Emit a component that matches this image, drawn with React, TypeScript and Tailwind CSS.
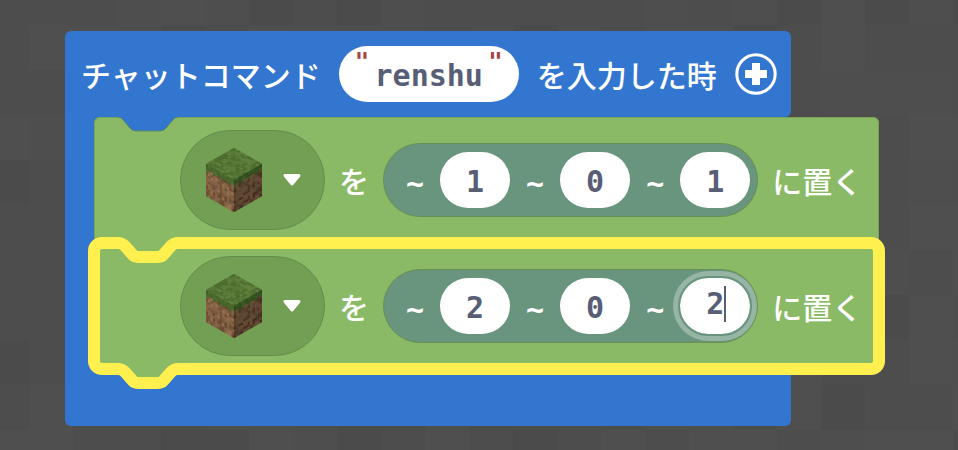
import React from "react";

const mono = "font-['DejaVu_Sans_Mono','Liberation_Mono',monospace] text-[30px] leading-[36px] font-bold";
const label = "font-['Noto_Sans_CJK_JP',sans-serif] text-[30px] leading-[36px] font-medium text-white whitespace-nowrap";
const quote =
  "self-start pt-[4px] font-['DejaVu_Sans_Mono','Liberation_Mono',monospace] text-[24px] leading-[24px] font-bold text-[#a94442]";

type Point = [number, number];

const greens = ["#4c6b2e", "#557535", "#5f7f3d", "#4f6d2f", "#587a38"];
const lightDirt = ["#8b6247", "#755039", "#9a6f51", "#6a4732", "#83604a", "#7d563d"];
const darkDirt = ["#5b3f2e", "#4b3325", "#684835", "#432d20", "#5f4637"];

function shade(colors: string[], i: number, j: number) {
  const n = Math.abs(Math.sin(i * 12.9898 + j * 78.233) * 43758.5453);
  return colors[Math.floor((n % 1) * colors.length)];
}

function face(origin: Point, u: Point, v: Point, n: number, color: (i: number, j: number) => string) {
  const cells = [];
  for (let i = 0; i < n; i++) {
    for (let j = 0; j < n; j++) {
      const corner = (a: number, b: number) =>
        `${origin[0] + (u[0] * a + v[0] * b) / n},${origin[1] + (u[1] * a + v[1] * b) / n}`;
      const c = color(i, j);
      cells.push(
        <polygon
          key={`${i}-${j}`}
          points={`${corner(i, j)} ${corner(i + 1, j)} ${corner(i + 1, j + 1)} ${corner(i, j + 1)}`}
          fill={c}
          stroke={c}
          strokeWidth="0.3"
        />
      );
    }
  }
  return cells;
}

function GrassCube() {
  return (
    <svg width="56" height="64" viewBox="0 0 56 64" aria-hidden="true">
      {face([28, 0], [28, 16], [-28, 16], 12, (i, j) => shade(greens, i, j))}
      {face([0, 16], [28, 16], [0, 32], 12, (i, j) =>
        j < 2 + ((i * 5) % 3 === 0 ? 1 : 0) ? shade(["#44622a", "#4d6d30"], i, j) : shade(lightDirt, i, j)
      )}
      {face([28, 32], [28, -16], [0, 32], 12, (i, j) =>
        j < 2 + ((i * 5) % 3 === 0 ? 1 : 0) ? shade(["#2f4a1c", "#385422"], i, j) : shade(darkDirt, i, j)
      )}
    </svg>
  );
}

function BlockPicker() {
  return (
    <button
      type="button"
      aria-label="草ブロック"
      aria-haspopup="listbox"
      className="flex h-[100px] w-[145px] items-center gap-[20px] rounded-full border border-[#668d4b] bg-[#739f54] pl-[25px]"
    >
      <GrassCube />
      <svg width="20" height="14" viewBox="0 0 20 14" aria-hidden="true">
        <path d="M3 2.5H17L10 11Z" fill="#fff" stroke="#fff" strokeWidth="3" strokeLinejoin="round" />
      </svg>
    </button>
  );
}

function NumberField({ value, name, active }: { value: string; name: string; active?: boolean }) {
  return (
    <label className="relative flex items-center gap-4">
      <span className={`${mono} pt-2 text-white`}>~</span>
      <input
        type="text"
        aria-label={name}
        defaultValue={value}
        className={`${mono} h-[56px] w-[70px] rounded-full bg-white text-center text-[#575e75] outline-none ${
          active ? "pb-[6px] ring-[7px] ring-white/30 shadow-[0_0_0_2px_#69957e]" : "pt-[2px]"
        }`}
      />
      {active && (
        <>
          <span className="pointer-events-none absolute -right-[2px] -top-[2px] h-[60px] w-[74px] rounded-full border-2 border-[#69957e]" />
          <span className="absolute right-[24px] top-[8px] h-[36px] w-[2px] bg-[#575e75]" />
        </>
      )}
    </label>
  );
}

function Notch() {
  return (
    <svg className="absolute left-[20px] top-0" width="70" height="16" viewBox="0 0 70 16" aria-hidden="true">
      <path d="M4 0Q7 0 9 3L16 11Q18 14 22 14H46Q50 14 52 11L59 3Q61 0 64 0Z" fill="#3376d0" />
      <path
        d="M4 0.5Q7 0 9 3L16 11Q18 14 22 14H46Q50 14 52 11L59 3Q61 0 64 0.5"
        fill="none"
        stroke="#5d8a5c"
      />
    </svg>
  );
}

function OutlineNotch({ className }: { className: string }) {
  return (
    <svg className={`absolute left-[18px] ${className}`} width="72" height="28" viewBox="0 0 72 28" aria-hidden="true">
      <path d="M0 0H72V7H62L52 20H20L10 7H0Z" fill="#8aba66" />
      <path
        d="M0 7H6Q10 7 13 10L20 18Q22 21 26 21H46Q50 21 52 18L59 10Q62 7 66 7H72"
        fill="none"
        stroke="#fff04f"
        strokeWidth="12"
      />
    </svg>
  );
}

function PlaceBlock({ values, selected }: { values: string[]; selected?: boolean }) {
  return (
    <section
      className={`relative flex h-[126px] w-max items-center gap-[14px] bg-[#8aba66] pl-[86px] pr-[17px] ${
        selected ? "z-10" : "rounded-t-[6px] shadow-[inset_0_0_0_1px_#78a257]"
      }`}
    >
      {selected ? (
        <>
          <div className="pointer-events-none absolute -inset-[6px] rounded-[14px] border-[12px] border-[#fff04f]" />
          <OutlineNotch className="top-[-7px]" />
          <OutlineNotch className="bottom-[-21px]" />
        </>
      ) : (
        <Notch />
      )}
      <BlockPicker />
      <span className={label}>を</span>
      <div className="flex h-[74px] items-center gap-4 rounded-full border border-[#6a8f52] bg-[#69957e] pl-[22px] pr-[7px]">
        <NumberField value={values[0]} name="X" />
        <NumberField value={values[1]} name="Y" />
        <NumberField value={values[2]} name="Z" active={selected} />
      </div>
      <span className={label}>に置く</span>
    </section>
  );
}

function Backdrop() {
  const tiles = [];
  for (let row = 0; row < 12; row++) {
    for (let col = 0; col < 24; col++) {
      tiles.push(
        <rect
          key={`${row}-${col}`}
          x={col * 44 - 15}
          y={row * 45 - 20}
          width="44"
          height="45"
          fill={shade(["#4d4d4d", "#4f4f4f", "#4e4e4e", "#4b4b4b", "#4d4d4d"], col, row)}
        />
      );
    }
  }
  return (
    <svg className="absolute inset-0 h-full w-full" aria-hidden="true">
      {tiles}
    </svg>
  );
}

export default function App() {
  return (
    <main className="relative min-h-screen overflow-hidden bg-[#4d4d4d] pb-6 pl-[65px] pt-[31px]">
      <Backdrop />
      <article className="relative flex w-fit flex-col">
        <header className="flex h-[86px] items-center gap-[18px] rounded-t-[6px] rounded-br-[6px] bg-[#3376d0] pl-4 pr-[14px]">
          <span className={label}>チャットコマンド</span>
          <label className="flex h-[56px] w-[180px] items-center justify-center rounded-full bg-white px-[16px]">
            <span className={quote}>"</span>
            <input
              type="text"
              aria-label="コマンド"
              defaultValue="renshu"
              className={`${mono} w-full min-w-0 pt-1 text-center text-[#575e75] outline-none`}
            />
            <span className={quote}>"</span>
          </label>
          <span className={label}>を入力した時</span>
          <button type="button" aria-label="追加">
            <svg width="42" height="42" viewBox="0 0 42 42" aria-hidden="true">
              <circle cx="21" cy="21" r="19.2" fill="none" stroke="#fff" strokeWidth="3" />
              <path d="M21 10V32M10 21H32" stroke="#fff" strokeWidth="8" />
            </svg>
          </button>
        </header>
        <div className="w-[45px] bg-[#3376d0] pl-[29px]">
          <PlaceBlock values={["1", "0", "1"]} />
          <PlaceBlock values={["2", "0", "2"]} selected />
        </div>
        <footer className="h-[57px] rounded-b-[6px] bg-[#3376d0]" />
      </article>
    </main>
  );
}
